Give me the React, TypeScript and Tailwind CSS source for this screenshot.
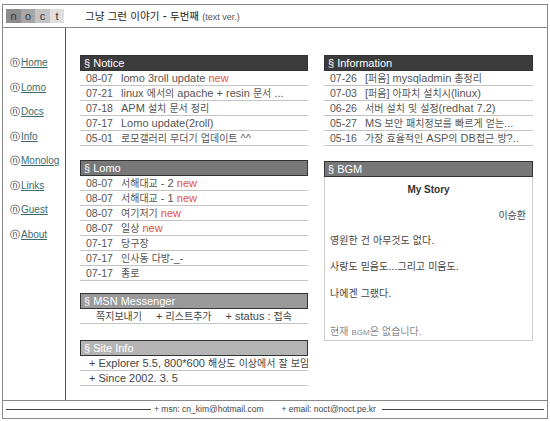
import React from 'react';

const font = "font-['Liberation_Sans','Noto_Sans_CJK_KR',sans-serif]";

interface Row {
  date: string;
  title: string;
  isNew?: boolean;
}

const notice: Row[] = [
  { date: '08-07', title: 'lomo 3roll update', isNew: true },
  { date: '07-21', title: 'linux 에서의 apache + resin 문서 ...' },
  { date: '07-18', title: 'APM 설치 문서 정리' },
  { date: '07-17', title: 'Lomo update(2roll)' },
  { date: '05-01', title: '로모갤러리 무더기 업데이트 ^^' },
];

const information: Row[] = [
  { date: '07-26', title: '[퍼옴] mysqladmin 총정리' },
  { date: '07-03', title: '[퍼옴] 아파치 설치시(linux)' },
  { date: '06-26', title: '서버 설치 및 설정(redhat 7.2)' },
  { date: '05-27', title: 'MS 보안 패치정보를 빠르게 얻는...' },
  { date: '05-16', title: '가장 효율적인 ASP의 DB접근 방?..' },
];

const lomo: Row[] = [
  { date: '08-07', title: '서해대교 - 2', isNew: true },
  { date: '08-07', title: '서해대교 - 1', isNew: true },
  { date: '08-07', title: '여기저기', isNew: true },
  { date: '08-07', title: '일상', isNew: true },
  { date: '07-17', title: '당구장' },
  { date: '07-17', title: '인사동 다방-_-' },
  { date: '07-17', title: '종로' },
];

const menu = ['Home', 'Lomo', 'Docs', 'Info', 'Monolog', 'Links', 'Guest', 'About'];

// Hangul runs are set a bit smaller so they keep the narrow width of the original font
const K = ({ t, cls = 'text-[10px]' }: { t: string; cls?: string }) => (
  <>
    {t.split(/([\u3131-\uD7A3]+)/).map((part, i) =>
      i % 2 === 1 ? (
        <span key={i} className={cls}>
          {part}
        </span>
      ) : (
        <React.Fragment key={i}>{part}</React.Fragment>
      )
    )}
  </>
);

const SectionHead = ({ title, tone }: { title: string; tone: string }) => (
  <div className={`h-[16px] flex items-center px-[3px] border border-[#333] text-white text-[11px] leading-none ${tone}`}>
    § {title}
  </div>
);

const RowList = ({ rows }: { rows: Row[] }) => (
  <div>
    {rows.map((r, i) => (
      <div key={i} className="h-[15px] flex items-center border-b border-[#c4c4c4] text-[11px] text-[#555] leading-none whitespace-nowrap overflow-hidden">
        <span className="w-[37px] pl-[6px] shrink-0 text-[10.5px]">{r.date}</span>
        <span className="ml-[4px]">
          <K t={r.title} />
          {r.isNew && <span className="text-[#e0553a]"> new</span>}
        </span>
      </div>
    ))}
  </div>
);

export default function App() {
  return (
    <div className={`w-[550px] h-[421px] bg-white pt-[4px] pl-[2px] ${font}`}>
      <div className="w-[546px] h-[415px] border border-[#888] flex flex-col">
        {/* header */}
        <div className="h-[23px] shrink-0 border-b border-[#888] flex items-center">
          <div className="flex ml-[3px] h-[14px] text-[11px] leading-none text-[#333]">
            <span className="w-[15px] flex items-center justify-center bg-[#8c8c8c]">n</span>
            <span className="w-[14px] flex items-center justify-center bg-[#a6a6a6]">o</span>
            <span className="w-[15px] flex items-center justify-center bg-[#c4c4c4]">c</span>
            <span className="w-[14px] flex items-center justify-center bg-[#dedede]">t</span>
          </div>
          <div className="ml-[21px] text-[12px] text-[#222] leading-none whitespace-nowrap">
            <K t="그냥 그런 이야기 - 두번째" cls="text-[10.5px]" />{' '}
            <span className="text-[9px] text-[#555]">(text ver.)</span>
          </div>
        </div>

        {/* body */}
        <div className="h-[373px] shrink-0 flex border-b border-[#888]">
          <div className="w-[63px] shrink-0 border-r border-[#555] pt-[23px] pl-[7px]">
            {menu.map((m) => (
              <div key={m} className="h-[24.5px] flex items-center text-[10px] leading-none">
                <span className="text-[#222] mr-[1px] text-[10px] font-['DejaVu_Sans',sans-serif]">ⓝ</span>
                <span className="text-[#3b6b6e] underline">{m}</span>
              </div>
            ))}
          </div>

          <div className="flex-1 flex pt-[27px] pl-[14px] gap-[16px]">
            {/* left column */}
            <div className="w-[228px]">
              <SectionHead title="Notice" tone="bg-[#3c3c3c]" />
              <RowList rows={notice} />

              <div className="mt-[14px]">
                <SectionHead title="Lomo" tone="bg-[#787878]" />
                <RowList rows={lomo} />
              </div>

              <div className="mt-[12px]">
                <SectionHead title="MSN Messenger" tone="bg-[#9a9a9a]" />
                <div className="h-[15px] flex items-center justify-between px-[16px] border-b border-[#c4c4c4] text-[11px] text-[#444] leading-none whitespace-nowrap">
                  <span><K t="쪽지보내기" /></span>
                  <span><K t="+ 리스트추가" /></span>
                  <span><K t="+ status : 접속" /></span>
                </div>
              </div>

              <div className="mt-[16px]">
                <SectionHead title="Site Info" tone="bg-[#b4b4b4]" />
                <div className="h-[15px] flex items-center pl-[9px] border-b border-[#c4c4c4] text-[11px] text-[#444] leading-none whitespace-nowrap overflow-hidden">
                  <span><K t="+ Explorer 5.5, 800*600 해상도 이상에서 잘 보임" /></span>
                </div>
                <div className="h-[15px] flex items-center pl-[9px] border-b border-[#c4c4c4] text-[11px] text-[#444] leading-none">
                  + Since 2002. 3. 5
                </div>
              </div>
            </div>

            {/* right column */}
            <div className="w-[209px]">
              <SectionHead title="Information" tone="bg-[#3c3c3c]" />
              <RowList rows={information} />

              <div className="mt-[15px]">
                <SectionHead title="BGM" tone="bg-[#787878]" />
                <div className="h-[164px] border border-t-0 border-[#ccc] px-[5px] text-[11px] text-[#444] leading-none flex flex-col">
                  <div className="mt-[8px] text-center font-bold text-[10px] text-[#333]">My Story</div>
                  <div className="mt-[15px] text-right pr-[1px]"><K t="이승환" /></div>
                  <div className="mt-[14px]"><K t="영원한 건 아무것도 없다." /></div>
                  <div className="mt-[15px]"><K t="사랑도 믿음도...그리고 미움도." /></div>
                  <div className="mt-[16px]"><K t="나에겐 그랬다." /></div>
                  <div className="mt-[27px] text-[#888]">
                    <K t="현재 " /><span className="text-[8px]">BGM</span><K t="은 없습니다." />
                  </div>
                </div>
              </div>
            </div>
          </div>
        </div>

        {/* footer */}
        <div className="flex-1 flex items-center text-[8.5px] text-[#444] leading-none whitespace-nowrap">
          <div className="w-[145px] ml-[3px] border-t border-[#444]" />
          <span className="ml-[3px]">+ msn: cn_kim@hotmail.com</span>
          <span className="ml-[18px]">+ email: noct@noct.pe.kr</span>
          <div className="flex-1 ml-[6px] mr-[3px] border-t border-[#444]" />
        </div>
      </div>
    </div>
  );
}
